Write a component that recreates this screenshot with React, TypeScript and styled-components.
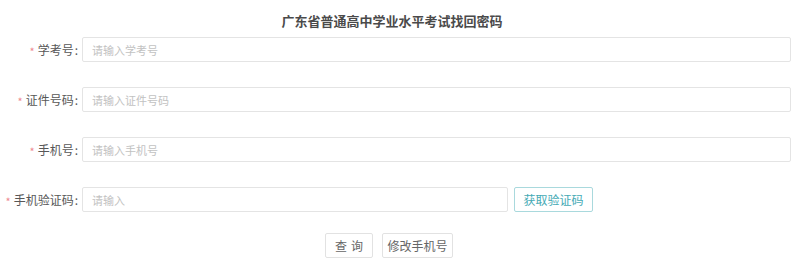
import React from "react";
import styled, { createGlobalStyle } from "styled-components";

const GlobalStyle = createGlobalStyle`
  html, body {
    margin: 0;
    padding: 0;
    background: #ffffff;
  }
  body {
    font-family: "Microsoft YaHei", "Noto Sans CJK SC", "Noto Sans", sans-serif;
  }
`;

const Page = styled.div`
  width: 800px;
  padding: 12px 9px 0 0;
  box-sizing: border-box;
`;

const Title = styled.h2`
  margin: 0 0 7px 0;
  width: 784px;
  text-align: center;
  font-size: 13px;
  line-height: 18px;
  font-weight: 700;
  color: #4a4a4a;
`;

const Form = styled.form`
  display: flex;
  flex-direction: column;
  gap: 25px;
`;

const Row = styled.div`
  display: flex;
  align-items: center;
  height: 25px;
`;

const Label = styled.label`
  width: 82px;
  flex-shrink: 0;
  padding-right: 4px;
  box-sizing: border-box;
  text-align: right;
  font-size: 12px;
  color: #575757;
  white-space: nowrap;
`;

const Star = styled.span`
  color: #ee8a90;
  font-size: 11px;
  margin-right: 3px;
  vertical-align: -1px;
`;

const Colon = styled.span`
  margin-left: 1px;
`;

const Input = styled.input<{ $width?: string }>`
  width: ${(p) => p.$width ?? "709px"};
  height: 25px;
  box-sizing: border-box;
  border: 1px solid #e4e4e4;
  border-radius: 2px;
  padding: 0 9px;
  font-size: 11px;
  font-family: inherit;
  color: #333;
  outline: none;
  &::placeholder {
    color: #c2c2c2;
  }
`;

const CodeButton = styled.button`
  margin-left: 6px;
  width: 79px;
  height: 25px;
  box-sizing: border-box;
  border: 1px solid #a9d9dd;
  border-radius: 2px;
  background: #ffffff;
  color: #45aab5;
  font-size: 12px;
  font-family: inherit;
  padding: 0;
  cursor: pointer;
`;

const Actions = styled.div`
  display: flex;
  justify-content: center;
  gap: 9px;
  width: 778px;
  margin-top: 21px;
`;

const Button = styled.button<{ $width: string; $spaced?: boolean }>`
  width: ${(p) => p.$width};
  height: 25px;
  box-sizing: border-box;
  border: 1px solid #e2e2e2;
  border-radius: 2px;
  background: #ffffff;
  color: #666666;
  font-size: 12px;
  font-family: inherit;
  padding: 0;
  letter-spacing: ${(p) => (p.$spaced ? "4px" : "0")};
  text-indent: ${(p) => (p.$spaced ? "4px" : "0")};
  cursor: pointer;
`;

const fields = [
  { label: "学考号", placeholder: "请输入学考号" },
  { label: "证件号码", placeholder: "请输入证件号码" },
  { label: "手机号", placeholder: "请输入手机号" },
];

export default function App() {
  return (
    <>
      <GlobalStyle />
      <Page>
        <Title>广东省普通高中学业水平考试找回密码</Title>
        <Form onSubmit={(e) => e.preventDefault()}>
          {fields.map((f) => (
            <Row key={f.label}>
              <Label>
                <Star>*</Star>
                {f.label}
                <Colon>:</Colon>
              </Label>
              <Input placeholder={f.placeholder} />
            </Row>
          ))}
          <Row>
            <Label>
              <Star>*</Star>
              手机验证码
              <Colon>:</Colon>
            </Label>
            <Input $width="426px" placeholder="请输入" />
            <CodeButton type="button">获取验证码</CodeButton>
          </Row>
        </Form>
        <Actions>
          <Button $width="48px" $spaced type="button">
            查询
          </Button>
          <Button $width="71px" type="button">
            修改手机号
          </Button>
        </Actions>
      </Page>
    </>
  );
}
